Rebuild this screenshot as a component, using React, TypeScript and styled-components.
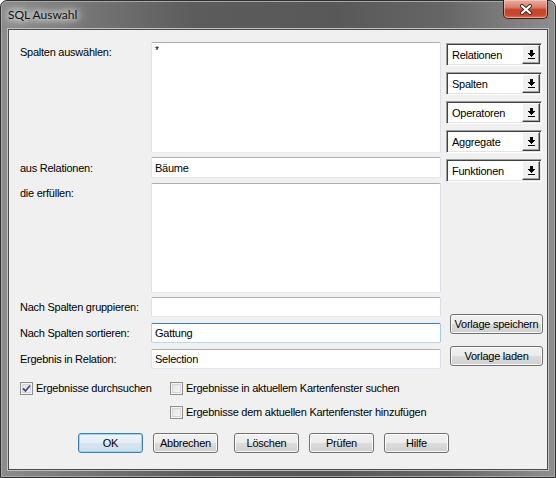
import styled, { createGlobalStyle } from "styled-components";

const GlobalStyle = createGlobalStyle`
  html, body {
    margin: 0;
    padding: 0;
    background: #ffffff;
  }
  * {
    box-sizing: border-box;
  }
`;

const Window = styled.div`
  width: 556px;
  height: 478px;
  display: flex;
  flex-direction: column;
  padding: 0 7px 7px;
  border: 1px solid #2e2e2e;
  border-radius: 7px 7px 0 0;
  background: linear-gradient(
    90deg,
    #8c8c8c 0%,
    #7a7a7a 12%,
    #5c5c5c 35%,
    #585858 60%,
    #666666 80%,
    #8e8e8e 100%
  );
  box-shadow: inset 0 0 0 1px #a9a9a9;
  font-family: "Liberation Sans", Arial, sans-serif;
  font-size: 11px;
  letter-spacing: -0.25px;
  color: #000;
`;

const TitleBar = styled.div`
  height: 28px;
  display: flex;
  align-items: flex-start;
  justify-content: space-between;
`;

const Title = styled.span`
  margin-top: 6px;
  font-family: Lato, "Noto Sans", sans-serif;
  font-size: 12px;
  letter-spacing: 0;
  color: #111;
  text-shadow: 0 0 6px #fff, 0 0 10px #fff, 0 0 14px rgba(255, 255, 255, 0.9);
`;

const CloseButton = styled.div`
  width: 45px;
  height: 19px;
  margin-top: -1px;
  display: flex;
  align-items: center;
  justify-content: center;
  border: 1px solid #3e1a12;
  border-top: none;
  border-radius: 0 0 5px 5px;
  background: linear-gradient(
    #e9b0a2 0%,
    #d9806b 40%,
    #c5432a 55%,
    #c94a2e 85%,
    #dd7a5d 100%
  );
  box-shadow: inset 0 0 0 1px rgba(255, 210, 200, 0.55);
`;

const Client = styled.div`
  flex: 1;
  display: flex;
  flex-direction: column;
  padding: 12px 6px 0 11px;
  background: #f0f0f0;
  border: 1px solid #4a4a4a;
  box-shadow: 0 0 0 1px #c2c2c2;
`;

const Main = styled.div`
  display: flex;
  gap: 5px;
`;

const Form = styled.div`
  display: flex;
  flex-direction: column;
`;

const FieldRow = styled.div<{ $gap: number; $top?: boolean }>`
  display: grid;
  grid-template-columns: 131px 290px;
  align-items: ${(p) => (p.$top ? "start" : "center")};
  margin-top: ${(p) => p.$gap}px;
`;

const Label = styled.span<{ $top?: boolean }>`
  padding-top: ${(p) => (p.$top ? "4px" : "0")};
`;

const inputBorder = `
  border: 1px solid;
  border-color: #abadb3 #dbdfe6 #e3e9ef #e2e3ea;
  border-radius: 2px;
  background: #fff;
  font-family: "Liberation Sans", Arial, sans-serif;
  font-size: 11px;
  letter-spacing: -0.25px;
  color: #000;
  outline: none;
`;

const TextBox = styled.input<{ $h: number; $focused?: boolean }>`
  ${inputBorder}
  height: ${(p) => p.$h}px;
  width: 290px;
  padding: 0 3px;
  ${(p) =>
    p.$focused &&
    `border-color: #3d7bad #a4c9e3 #b7d9ed #b5cfe7;`}
`;

const TextArea = styled.textarea<{ $h: number }>`
  ${inputBorder}
  height: ${(p) => p.$h}px;
  width: 290px;
  padding: 1px 3px;
  resize: none;
  overflow: hidden;
  line-height: 13px;
  font-size: 10px;
`;

const Side = styled.div`
  width: 96px;
  padding-top: 1px;
  display: flex;
  flex-direction: column;
  gap: 6px;
`;

const Combo = styled.div`
  height: 23px;
  display: flex;
  border: 1px solid;
  border-color: #a0a0a0 #ffffff #ffffff #a0a0a0;
  box-shadow: inset 1px 1px 0 #404040, inset -1px -1px 0 #e3e3e3;
  background: #fff;
`;

const ComboText = styled.span`
  flex: 1;
  display: flex;
  align-items: center;
  padding-left: 5px;
  padding-top: 1px;
`;

const ComboArrow = styled.div`
  width: 18px;
  margin: 1px 1px 1px 0;
  display: flex;
  align-items: center;
  justify-content: center;
  background: #f0f0f0;
  border: 1px solid;
  border-color: #ffffff #404040 #404040 #ffffff;
  box-shadow: inset -1px -1px 0 #a0a0a0;
`;

const Button = styled.div<{ $w?: number; $default?: boolean; $ml?: number }>`
  width: ${(p) => p.$w ?? 65}px;
  height: 20px;
  margin-left: ${(p) => p.$ml ?? 0}px;
  display: flex;
  align-items: center;
  justify-content: center;
  font-size: 11px;
  border: 1px solid ${(p) => (p.$default ? "#3c7fb1" : "#707070")};
  border-radius: 3px;
  background: ${(p) =>
    p.$default
      ? "linear-gradient(#edf4f9 0%, #e4eef6 50%, #d6e5f0 50%, #cfdfeb 100%)"
      : "linear-gradient(#f2f2f2 0%, #ebebeb 50%, #dddddd 50%, #cfcfcf 100%)"};
  box-shadow: inset 0 0 0 1px
    ${(p) => (p.$default ? "#9bd6f3" : "rgba(255,255,255,0.85)")};
`;

const SideButtons = styled.div`
  margin-top: 126px;
  padding-left: 4px;
  display: flex;
  flex-direction: column;
  gap: 12px;
`;

const Options = styled.div`
  margin-top: 12px;
  display: grid;
  grid-template-columns: 150px auto;
  row-gap: 10px;
`;

const Option = styled.label<{ $col?: number }>`
  grid-column: ${(p) => p.$col ?? 1};
  display: flex;
  align-items: center;
  gap: 3px;
  height: 14px;
`;

const Box = styled.span`
  width: 13px;
  height: 13px;
  display: flex;
  align-items: center;
  justify-content: center;
  border: 1px solid #8e8f8f;
  background: linear-gradient(135deg, #dcdcdc 0%, #f0f0f0 60%, #fbfbfb 100%);
  box-shadow: inset 0 0 0 1px #f4f4f4, inset 0 0 0 2px #d6d6d6;
`;

const ButtonBar = styled.div`
  margin-top: 14px;
  padding-left: 58px;
  display: flex;
  gap: 10px;
`;

const Arrow = () => (
  <svg width="7" height="10" viewBox="0 0 7 10" shapeRendering="crispEdges">
    <rect x="2" y="0" width="3" height="3" fill="#000" />
    <rect x="0" y="3" width="7" height="1" fill="#000" />
    <rect x="1" y="4" width="5" height="1" fill="#000" />
    <rect x="2" y="5" width="3" height="1" fill="#000" />
    <rect x="3" y="6" width="1" height="1" fill="#000" />
    <rect x="0" y="8" width="7" height="1" fill="#000" />
  </svg>
);

const CheckBox = ({ checked }: { checked?: boolean }) => (
  <Box>
    {checked && (
      <svg width="9" height="9" viewBox="0 0 9 9">
        <path
          d="M1 4.5 L3.5 7 L8 1.5"
          stroke="#3b4f8f"
          strokeWidth="1.8"
          fill="none"
        />
      </svg>
    )}
  </Box>
);

const combos = ["Relationen", "Spalten", "Operatoren", "Aggregate", "Funktionen"];

export default function App() {
  return (
    <>
      <GlobalStyle />
      <Window>
        <TitleBar>
          <Title>SQL Auswahl</Title>
          <CloseButton>
            <svg width="14" height="11" viewBox="0 0 14 11">
              <path
                d="M3 2 L11 9 M11 2 L3 9"
                stroke="#3a2a28"
                strokeWidth="4"
                strokeLinecap="round"
              />
              <path
                d="M3 2 L11 9 M11 2 L3 9"
                stroke="#ffffff"
                strokeWidth="2.2"
                strokeLinecap="round"
              />
            </svg>
          </CloseButton>
        </TitleBar>
        <Client>
          <Main>
            <Form>
              <FieldRow $gap={0} $top>
                <Label $top>Spalten auswählen:</Label>
                <TextArea $h={111} defaultValue="*" readOnly />
              </FieldRow>
              <FieldRow $gap={4}>
                <Label>aus Relationen:</Label>
                <TextBox $h={21} defaultValue="Bäume" readOnly />
              </FieldRow>
              <FieldRow $gap={5} $top>
                <Label $top>die erfüllen:</Label>
                <TextArea $h={110} defaultValue="" readOnly />
              </FieldRow>
              <FieldRow $gap={4}>
                <Label>Nach Spalten gruppieren:</Label>
                <TextBox $h={20} defaultValue="" readOnly />
              </FieldRow>
              <FieldRow $gap={6}>
                <Label>Nach Spalten sortieren:</Label>
                <TextBox $h={20} $focused defaultValue="Gattung" readOnly />
              </FieldRow>
              <FieldRow $gap={6}>
                <Label>Ergebnis in Relation:</Label>
                <TextBox $h={20} defaultValue="Selection" readOnly />
              </FieldRow>
            </Form>
            <Side>
              {combos.map((c) => (
                <Combo key={c}>
                  <ComboText>{c}</ComboText>
                  <ComboArrow>
                    <Arrow />
                  </ComboArrow>
                </Combo>
              ))}
              <SideButtons>
                <Button $w={93}>Vorlage speichern</Button>
                <Button $w={93}>Vorlage laden</Button>
              </SideButtons>
            </Side>
          </Main>
          <Options>
            <Option>
              <CheckBox checked />
              Ergebnisse durchsuchen
            </Option>
            <Option $col={2}>
              <CheckBox />
              Ergebnisse in aktuellem Kartenfenster suchen
            </Option>
            <Option $col={2}>
              <CheckBox />
              Ergebnisse dem aktuellen Kartenfenster hinzufügen
            </Option>
          </Options>
          <ButtonBar>
            <Button $default>OK</Button>
            <Button>Abbrechen</Button>
            <Button $ml={6}>Löschen</Button>
            <Button>Prüfen</Button>
            <Button>Hilfe</Button>
          </ButtonBar>
        </Client>
      </Window>
    </>
  );
}
